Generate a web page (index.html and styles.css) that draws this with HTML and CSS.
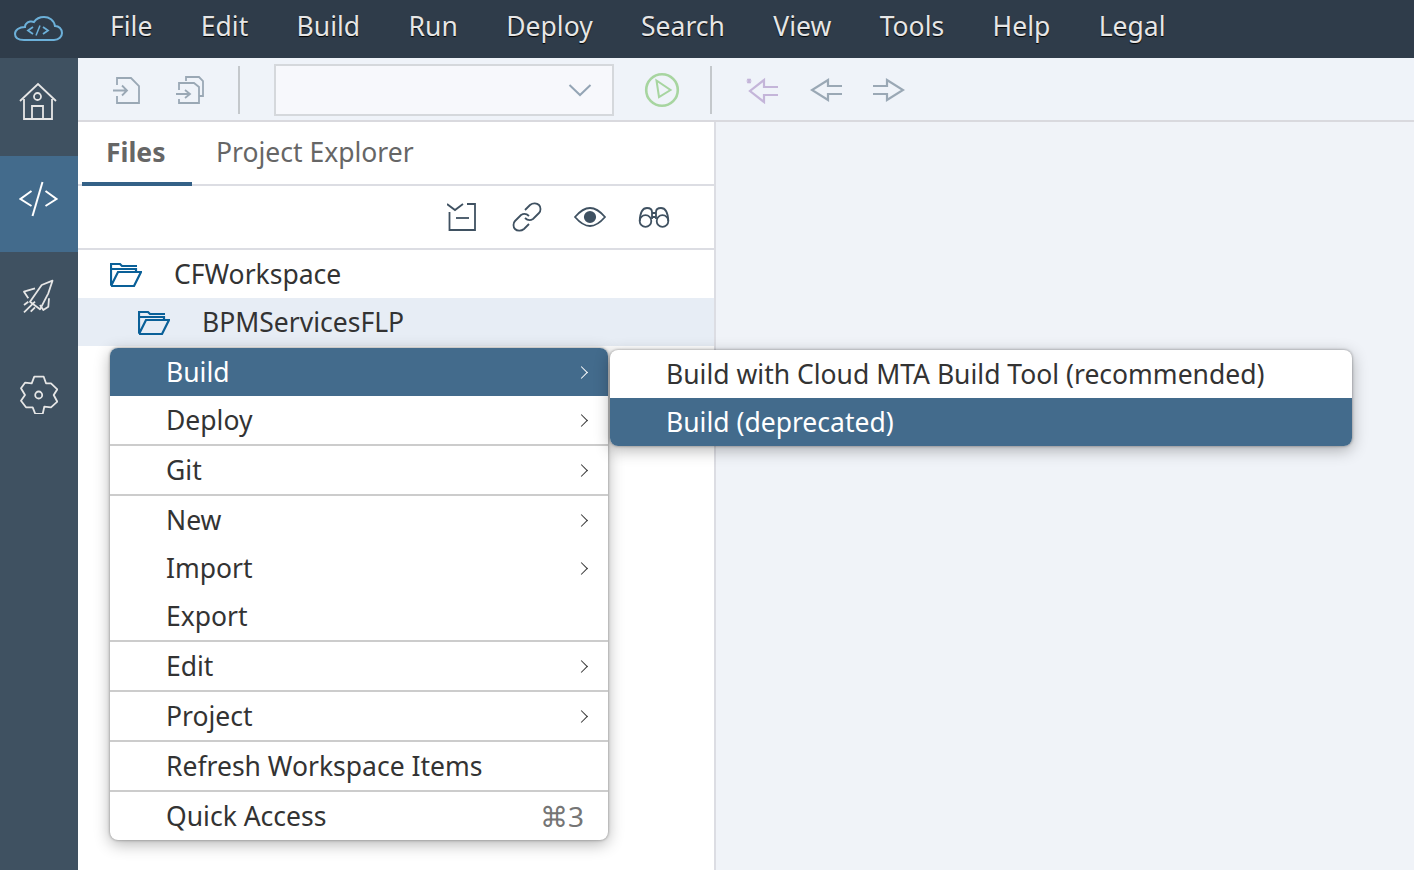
FILE: index.html
```html
<!DOCTYPE html>
<html lang="en">

<head>
    <meta charset="UTF-8">
    <link rel="stylesheet" href="styles.css">
    <title>SAP Web IDE</title>
</head>

<body>
    <header class="menubar">
        <svg class="logo" width="50" height="28" viewBox="0 0 50 28" fill="none" stroke="#6cb0d9" stroke-width="2">
            <path d="M11 25 H41 C46 25 49 21.500 49 18 C49 14 46 11 42 11 C41 5 36 2 31 2 C26 2 23 4 21 7 C19 6 15 6 13 9 C12 10 12 11 12 12 C6 12 2 15 2 19 C2 22.500 5 25 11 25 Z"/>
            <path d="M20 12 L15 15.500 L20 19 M30 12 L35 15.500 L30 19" stroke-width="1.800"/>
            <path d="M27 10.500 L23 20.500" stroke-width="1.500"/>
        </svg>
        <nav class="menubar-items">
            <span>File</span>
            <span>Edit</span>
            <span>Build</span>
            <span>Run</span>
            <span>Deploy</span>
            <span>Search</span>
            <span>View</span>
            <span>Tools</span>
            <span>Help</span>
            <span>Legal</span>
        </nav>
    </header>

    <div class="main">
        <aside class="sidebar">
            <div class="side-item">
                <svg width="40" height="40" viewBox="1 1 40 40" fill="none" stroke="#e6e6e6" stroke-width="1.800">
                    <path d="M2 20 L20 3 L38 20"/>
                    <path d="M6 18 V38 H34 V18"/>
                    <circle cx="19.500" cy="15.500" r="3.500"/>
                    <path d="M14 38 V25 H25 V38"/>
                </svg>
            </div>
            <div class="side-item side-active">
                <svg width="40" height="36" viewBox="0.500 0 40 36" fill="none" stroke="#ffffff" stroke-width="2">
                    <path d="M13 10 L2 18 L13 25 M27 10 L38 18 L27 25"/>
                    <path d="M24 1 L14 35"/>
                </svg>
            </div>
            <div class="side-item">
                <svg width="34" height="36" viewBox="0 -1 34 36" fill="none" stroke="#e6e6e6" stroke-width="1.800" stroke-linejoin="round">
                    <path d="M30.500 1.700 L19.700 6 L8 22.700 L18 30.300 L26.300 14.300 Z"/>
                    <path d="M13 9.300 L2 12.700 L6.300 19.300 M27 19.300 L26.300 27.700 L21.300 31 L18 26"/>
                    <path d="M2 26 L6.300 22.700 M2 33.300 L13 22.700 M8.700 32.700 L13 28.300"/>
                </svg>
            </div>
            <div class="side-item">
                <svg width="38" height="40" viewBox="0 -2 38 40" fill="none" stroke="#e6e6e6" stroke-width="1.800" stroke-linejoin="round">
                    <path d="M14.300 0.700 H23.700 L26 7.300 H31 L37.300 13.300 L33.700 19 L37.300 25.700 L31 31.300 L24.300 30.700 L22.700 38 H15.300 L12.700 31.300 L6 31.300 L1 24.700 L5 19 L1 12.300 L5 6.700 L11.700 7.300 Z"/>
                    <circle cx="18.700" cy="19" r="3.500"/>
                </svg>
            </div>
        </aside>

        <div class="workarea">
            <div class="toolbar">
                <svg class="tool-icon tool-first" width="30" height="30" viewBox="0 0 30 30" fill="none" stroke="#9aa8b5" stroke-width="1.800">
                    <path d="M5 10 V3 H19 L27 11 V28 H5 V21"/>
                    <path d="M1 15.500 H15 M10 10.500 L15 15.500 L10 20.500"/>
                </svg>
                <svg class="tool-icon" width="30" height="30" viewBox="0 0 30 30" fill="none" stroke="#9aa8b5" stroke-width="1.800">
                    <path d="M11 6 V2 H24 L28 6 V21 H24"/>
                    <path d="M4 15 V8 H19 L24 12 V28 H4 V24"/>
                    <path d="M1 19 H15 M10 15 L15 19 L10 23"/>
                </svg>
                <div class="tool-sep"></div>
                <div class="run-select">
                    <svg width="24" height="14" viewBox="0 0 24 14" fill="none" stroke="#94a5b5" stroke-width="2">
                        <path d="M1.500 2 L12 12 L22.500 2"/>
                    </svg>
                </div>
                <svg class="run-icon" width="36" height="36" viewBox="0 0 36 36" fill="none" stroke="#a7d5a0" stroke-width="2.600">
                    <circle cx="18" cy="18" r="15.800"/>
                    <path d="M12.500 8.500 L26.500 18 L15 25 Z" stroke-width="2"/>
                </svg>
                <div class="tool-sep tool-sep-run"></div>
                <svg class="tool-nav-first" width="34" height="28" viewBox="0 0 34 28" fill="none" stroke="#c4b5d9" stroke-width="2.200">
                    <path d="M33 11 H19 V4 L5 15 L19 26 V19 H33"/>
                    <path d="M1.500 5 H6.500 M4 2.500 V7.500 M2.300 3 L5.700 7 M5.700 3 L2.300 7" stroke-width="1.200"/>
                </svg>
                <svg class="tool-nav" width="32" height="26" viewBox="0 0 32 26" fill="none" stroke="#9aa8b5" stroke-width="2.200">
                    <path d="M32 9 H18 V3 L2 13 L18 23 V17 H32"/>
                </svg>
                <svg class="tool-nav" width="32" height="26" viewBox="0 0 32 26" fill="none" stroke="#9aa8b5" stroke-width="2.200">
                    <path d="M0 9 H14 V3 L30 13 L14 23 V17 H0"/>
                </svg>
            </div>

            <div class="panes">
                <section class="files-pane">
                    <div class="tabs">
                        <div class="tab tab-active">Files</div>
                        <div class="tab">Project Explorer</div>
                    </div>
                    <div class="pane-actions">
                        <svg width="33" height="30" viewBox="0 0 33 30" fill="none" stroke="#3f5161" stroke-width="1.800">
                            <path d="M0 2 L8 8 L16 2 M20 2 H28 V28 H2.500 V10"/>
                            <path d="M9 16 H22"/>
                        </svg>
                        <svg width="30" height="30" viewBox="0 0 30 30" fill="none" stroke="#3f5161" stroke-width="1.800">
                            <path d="M13 8 L18 3 C21 0.500 25 1 27 3 C29 5 29 9 27 11 L21 17 C18 19 15 18 13 16"/>
                            <path d="M17 22 L12 27 C9 29.500 5 29 3 27 C1 25 1 21 3 19 L9 13 C12 11 15 12 17 14"/>
                        </svg>
                        <svg width="32" height="20" viewBox="0 0 32 20" fill="none" stroke="#3f5161" stroke-width="1.800">
                            <path d="M1 10 C7 3 12 1 16 1 C20 1 25 3 31 10 C25 17 20 19 16 19 C12 19 7 17 1 10 Z"/>
                            <circle cx="16" cy="10" r="5.200" fill="#3f5161"/>
                        </svg>
                        <svg width="32" height="22" viewBox="0 0 32 22" fill="none" stroke="#3f5161" stroke-width="1.800">
                            <circle cx="7.500" cy="15" r="5.800"/>
                            <circle cx="24.500" cy="15" r="5.800"/>
                            <path d="M1.700 15 C2 8 4 2 9 2 C12 2 14 3 14 6 V13 M30.300 15 C30 8 28 2 23 2 C20 2 18 3 18 6 V13 M14 7 H18 M14 11 H18"/>
                        </svg>
                    </div>
                    <div class="tree">
                        <div class="tree-row">
                            <svg class="folder" width="32" height="26" viewBox="0 0 32 26" fill="none" stroke="#0a6098" stroke-width="2.200">
                                <path d="M1 24 V3 H10 L12 5 H27 M1 8 H26 V11 M1 25 H24 L31 11 H8 L1 25"/>
                            </svg>
                            <span>CFWorkspace</span>
                        </div>
                        <div class="tree-row tree-sub tree-selected">
                            <svg class="folder" width="32" height="26" viewBox="0 0 32 26" fill="none" stroke="#0a6098" stroke-width="2.200">
                                <path d="M1 24 V3 H10 L12 5 H27 M1 8 H26 V11 M1 25 H24 L31 11 H8 L1 25"/>
                            </svg>
                            <span>BPMServicesFLP</span>
                        </div>
                    </div>
                </section>
                <section class="editor-pane"></section>
            </div>
        </div>
    </div>

    <div class="context-menu">
        <div class="menu-item menu-hover">Build<span class="arrow"></span></div>
        <div class="menu-item">Deploy<span class="arrow"></span></div>
        <div class="menu-line"></div>
        <div class="menu-item">Git<span class="arrow"></span></div>
        <div class="menu-line"></div>
        <div class="menu-item">New<span class="arrow"></span></div>
        <div class="menu-item">Import<span class="arrow"></span></div>
        <div class="menu-item">Export</div>
        <div class="menu-line"></div>
        <div class="menu-item">Edit<span class="arrow"></span></div>
        <div class="menu-line"></div>
        <div class="menu-item">Project<span class="arrow"></span></div>
        <div class="menu-line"></div>
        <div class="menu-item">Refresh Workspace Items</div>
        <div class="menu-line"></div>
        <div class="menu-item">Quick Access<span class="shortcut">⌘3</span></div>
    </div>

    <div class="context-menu submenu">
        <div class="menu-item">Build with Cloud MTA Build Tool (recommended)</div>
        <div class="menu-item menu-hover">Build (deprecated)</div>
    </div>
</body>

</html>
```

FILE: styles.css
```css
* {
    box-sizing: border-box;
}

html,
body {
    height: 100%;
}

body {
    margin: 0;
    overflow: hidden;
    display: flex;
    flex-direction: column;
    font-family: "Noto Sans", "Open Sans", sans-serif;
    font-size: 26.500px;
    color: #333333;
}

svg {
    display: block;
    flex: none;
}

.menubar {
    height: 58px;
    flex: none;
    display: flex;
    align-items: center;
    padding-left: 13px;
    background-color: #2f3c4a;
    color: #e6e6e6;
}

.menubar-items {
    display: flex;
    gap: 48.400px;
    margin-left: 47px;
    padding-bottom: 6px;
    text-shadow: 0 1px 1px #000000;
}

.main {
    flex: 1;
    display: flex;
    min-height: 0;
}

.sidebar {
    width: 78px;
    flex: none;
    background-color: #3f5161;
}

.side-item {
    height: 98px;
    display: flex;
    align-items: center;
    justify-content: center;
    padding-bottom: 10px;
}

.side-active {
    height: 96px;
    background-color: #436b8c;
}

.workarea {
    flex: 1;
    display: flex;
    flex-direction: column;
    min-width: 0;
}

.toolbar {
    height: 64px;
    flex: none;
    display: flex;
    align-items: center;
    padding-top: 2px;
    background-color: #eff3f9;
    border-bottom: 2px solid #d9d9de;
}

.tool-first {
    margin-left: 34px;
}

.tool-icon + .tool-icon {
    margin-left: 33px;
}

.tool-sep {
    width: 2px;
    height: 48px;
    margin-left: 33px;
    background-color: #c4c8cc;
}

.run-select {
    width: 340px;
    height: 52px;
    margin-left: 34px;
    padding-right: 20px;
    display: flex;
    align-items: center;
    justify-content: flex-end;
    background-color: #f7f8fc;
    border: 2px solid #d5d8dc;
}

.run-icon {
    margin-left: 30px;
}

.tool-sep-run {
    margin-left: 30px;
}

.tool-nav-first {
    margin-left: 33px;
}

.tool-nav {
    margin-left: 31px;
}

.panes {
    flex: 1;
    display: flex;
    min-height: 0;
}

.files-pane {
    width: 638px;
    flex: none;
    background-color: #ffffff;
    border-right: 2px solid #dcdde3;
}

.editor-pane {
    flex: 1;
    background-color: #f0f3f8;
}

.tabs {
    height: 64px;
    display: flex;
    padding-left: 4px;
    border-bottom: 2px solid #dcdde3;
    color: #666666;
}

.tab {
    height: 64px;
    padding: 12px 24px 0;
}

.tab-active {
    width: 110px;
    font-weight: 700;
    border-bottom: 4px solid #346187;
}

.pane-actions {
    height: 64px;
    display: flex;
    align-items: center;
    justify-content: flex-end;
    gap: 32px;
    padding-right: 44px;
    border-bottom: 2px solid #dcdde3;
}

.tree-row {
    height: 48px;
    display: flex;
    align-items: center;
    gap: 32px;
    padding-left: 32px;
}

.tree-sub {
    padding-left: 60px;
}

.tree-selected {
    background-color: #e7edf5;
}

.context-menu {
    position: absolute;
    left: 110px;
    top: 348px;
    width: 498px;
    background-color: #ffffff;
    border-radius: 8px;
    overflow: hidden;
    box-shadow: 0 0 3px rgba(0, 0, 0, 0.4), 0 4px 16px rgba(0, 0, 0, 0.3);
}

.submenu {
    left: 610px;
    top: 350px;
    width: 742px;
}

.menu-item {
    height: 48px;
    display: flex;
    align-items: center;
    justify-content: space-between;
    padding: 0 20px 0 56px;
}

.menu-hover {
    background-color: #436b8c;
    color: #ffffff;
}

.menu-line {
    height: 2px;
    background-color: #cccccc;
}

.arrow {
    width: 9px;
    height: 9px;
    margin-right: 2px;
    border-top: 1.500px solid currentColor;
    border-right: 1.500px solid currentColor;
    transform: rotate(45deg);
}

.shortcut {
    color: #757575;
    font-size: 28px;
    margin-right: 4px;
}
```
